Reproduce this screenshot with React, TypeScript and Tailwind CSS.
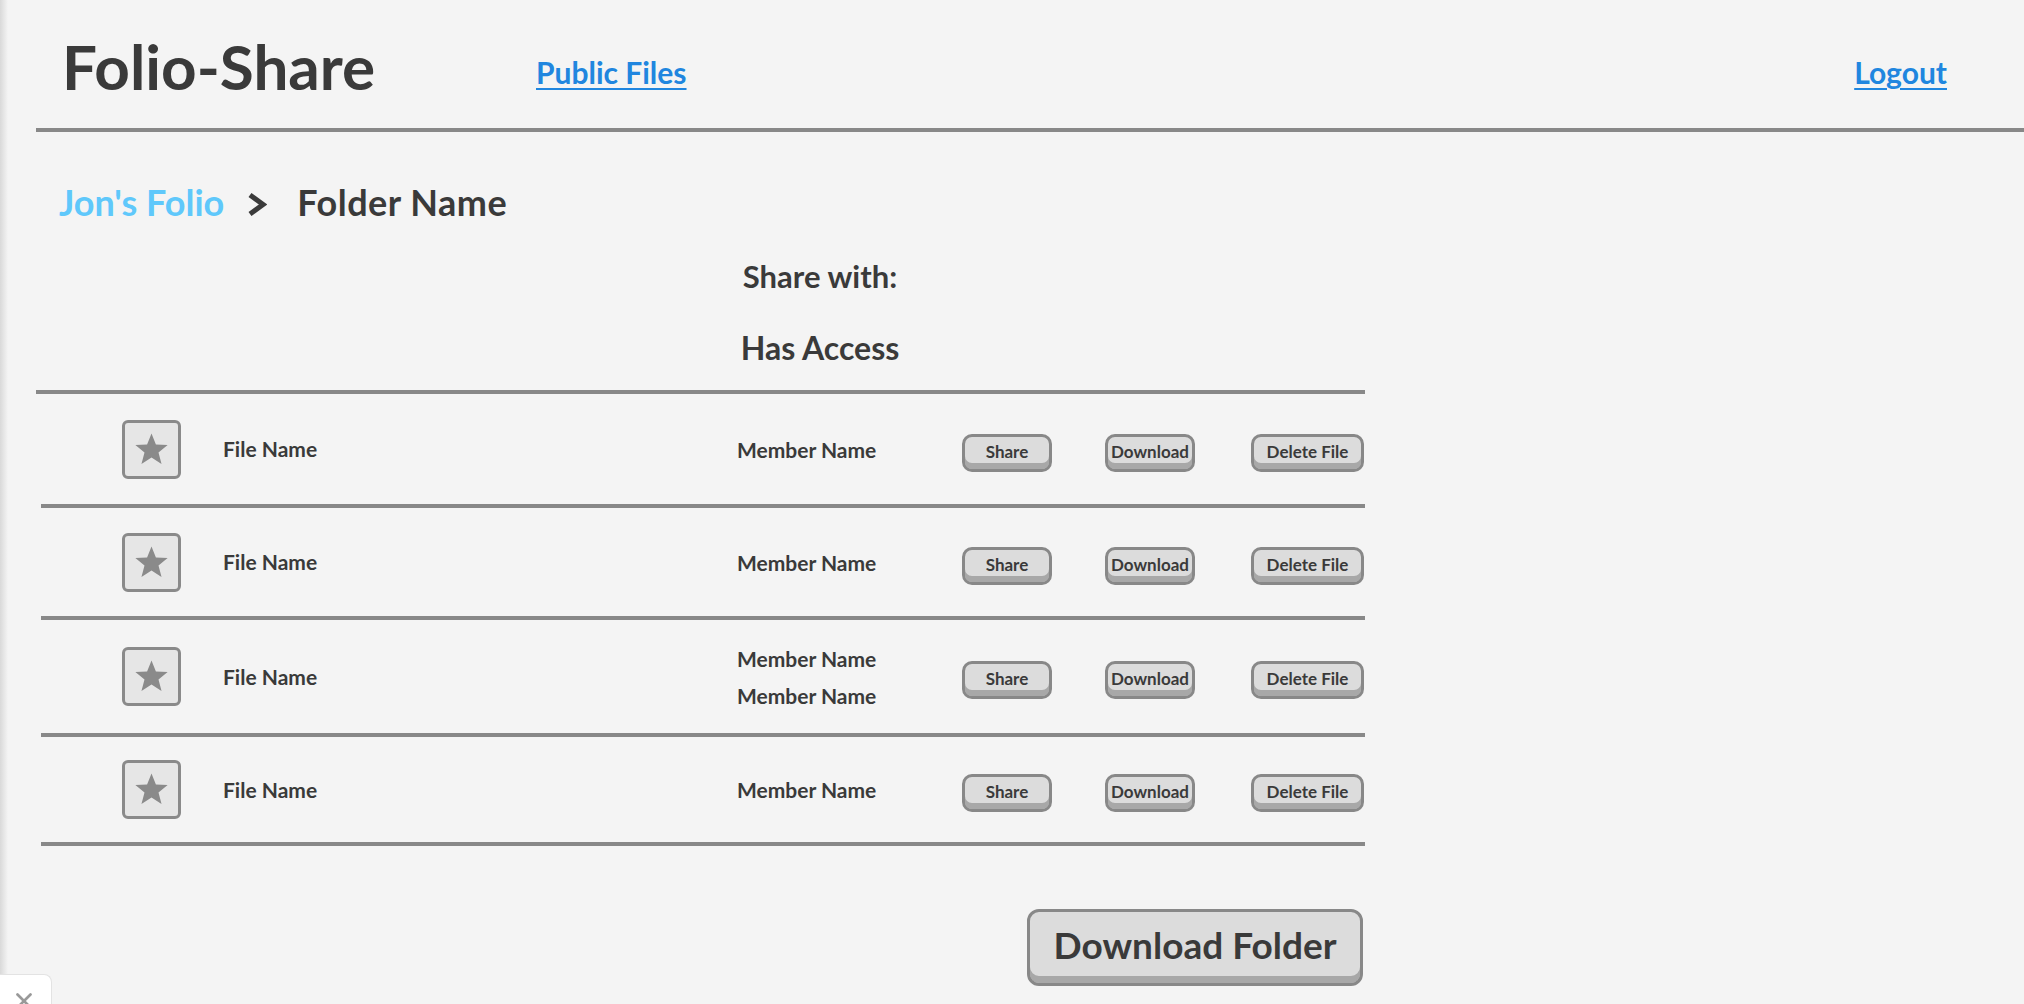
import { X } from "lucide-react";

const rows = [
  { members: ["Member Name"], height: "h-[114px]" },
  { members: ["Member Name"], height: "h-[112px]" },
  { members: ["Member Name", "Member Name"], height: "h-[117px]" },
  { members: ["Member Name"], height: "h-[109px]" },
];

function StarBox() {
  return (
    <div className="w-[59px] h-[59px] shrink-0 rounded-[6px] border-[3px] border-[#8a8a8a] bg-[#e6e6e6] flex items-center justify-center">
      <svg width="37" height="35" viewBox="0 0 24 23">
        <polygon
          points="12,1 14.9,8.2 22.6,8.6 16.6,13.5 18.6,21 12,16.8 5.4,21 7.4,13.5 1.4,8.6 9.1,8.2"
          fill="#8a8a8a"
        />
      </svg>
    </div>
  );
}

function SmallButton({ label, width }: { label: string; width: string }) {
  return (
    <button
      className={`${width} h-[38px] shrink-0 rounded-[10px] border-[3px] border-[#888888] bg-[#dcdcdc] shadow-[inset_0_-6px_0_#a8a8a8] pb-[3px] text-[17px] leading-none font-bold text-[#3a3a3a]`}
    >
      {label}
    </button>
  );
}

export default function App() {
  return (
    <div className="relative min-h-screen w-full overflow-hidden bg-[#f4f4f4] text-[#3a3a3a] font-['Lato','Open_Sans',sans-serif]">
      <div className="absolute inset-y-0 left-0 w-[8px] bg-linear-to-r from-[#d9d9d9] to-[#f4f4f4]" />

      <header className="ml-[36px] h-[132px] border-b-4 border-[#888888] flex items-start pl-[26px]">
        <h1 className="mt-[35px] w-[474px] text-[62px] leading-none font-bold">Folio-Share</h1>
        <a className="mt-[57px] text-[30px] leading-none font-bold text-[#2086df] underline decoration-2 underline-offset-[4px]">
          Public Files
        </a>
        <a className="ml-auto mr-[77px] mt-[57px] text-[30px] leading-none font-bold text-[#2086df] underline decoration-2 underline-offset-[4px]">
          Logout
        </a>
      </header>

      <nav className="mt-[52px] ml-[59px] flex items-center text-[36px] leading-none font-bold">
        <span className="text-[#5fc8fb]">Jon's Folio</span>
        <svg className="ml-[23px] mt-[4px]" width="20" height="23" viewBox="0 0 20 23">
          <polyline points="3,2 16,11.5 3,21" fill="none" stroke="#3a3a3a" strokeWidth="5" />
        </svg>
        <span className="ml-[30px] tracking-[0.5px]">Folder Name</span>
      </nav>

      <div className="ml-[700px] w-[240px] text-center font-bold leading-none">
        <p className="mt-[41px] text-[31px]">Share with:</p>
        <p className="mt-[40px] text-[32px]">Has Access</p>
      </div>

      <section className="mt-[26px] ml-[36px] w-[1329px]">
        <div className="h-[4px] bg-[#888888]" />
        {rows.map((row, idx) => (
          <div
            key={idx}
            className={`${row.height} ml-[5px] border-b-4 border-[#888888] flex items-center pl-[81px]`}
          >
            <StarBox />
            <span className="ml-[42px] w-[514px] text-[21px] font-bold">File Name</span>
            <div className="w-[225px] flex flex-col gap-[16px] text-[21px] leading-none font-bold">
              {row.members.map((m, i) => (
                <span key={i}>{m}</span>
              ))}
            </div>
            <div className="mt-[7px] flex items-center">
              <SmallButton label="Share" width="w-[90px]" />
              <div className="ml-[53px]">
                <SmallButton label="Download" width="w-[90px]" />
              </div>
              <div className="ml-[56px]">
                <SmallButton label="Delete File" width="w-[113px]" />
              </div>
            </div>
          </div>
        ))}

        <div className="mt-[63px] flex justify-end pr-[2px]">
          <button className="w-[336px] h-[77px] rounded-[12px] border-[3px] border-[#888888] bg-[#dcdcdc] shadow-[inset_0_-7px_0_#a8a8a8] pb-[6px] text-[37px] leading-none font-bold text-[#3a3a3a]">
            Download Folder
          </button>
        </div>
      </section>

      <div className="absolute left-0 bottom-0 w-[52px] h-[30px] overflow-hidden rounded-tr-[8px] border-t border-r border-[#e3e3e3] bg-white">
        <X className="ml-[11px] mt-[13px] text-[#999999]" size={26} strokeWidth={2.5} />
      </div>
    </div>
  );
}
